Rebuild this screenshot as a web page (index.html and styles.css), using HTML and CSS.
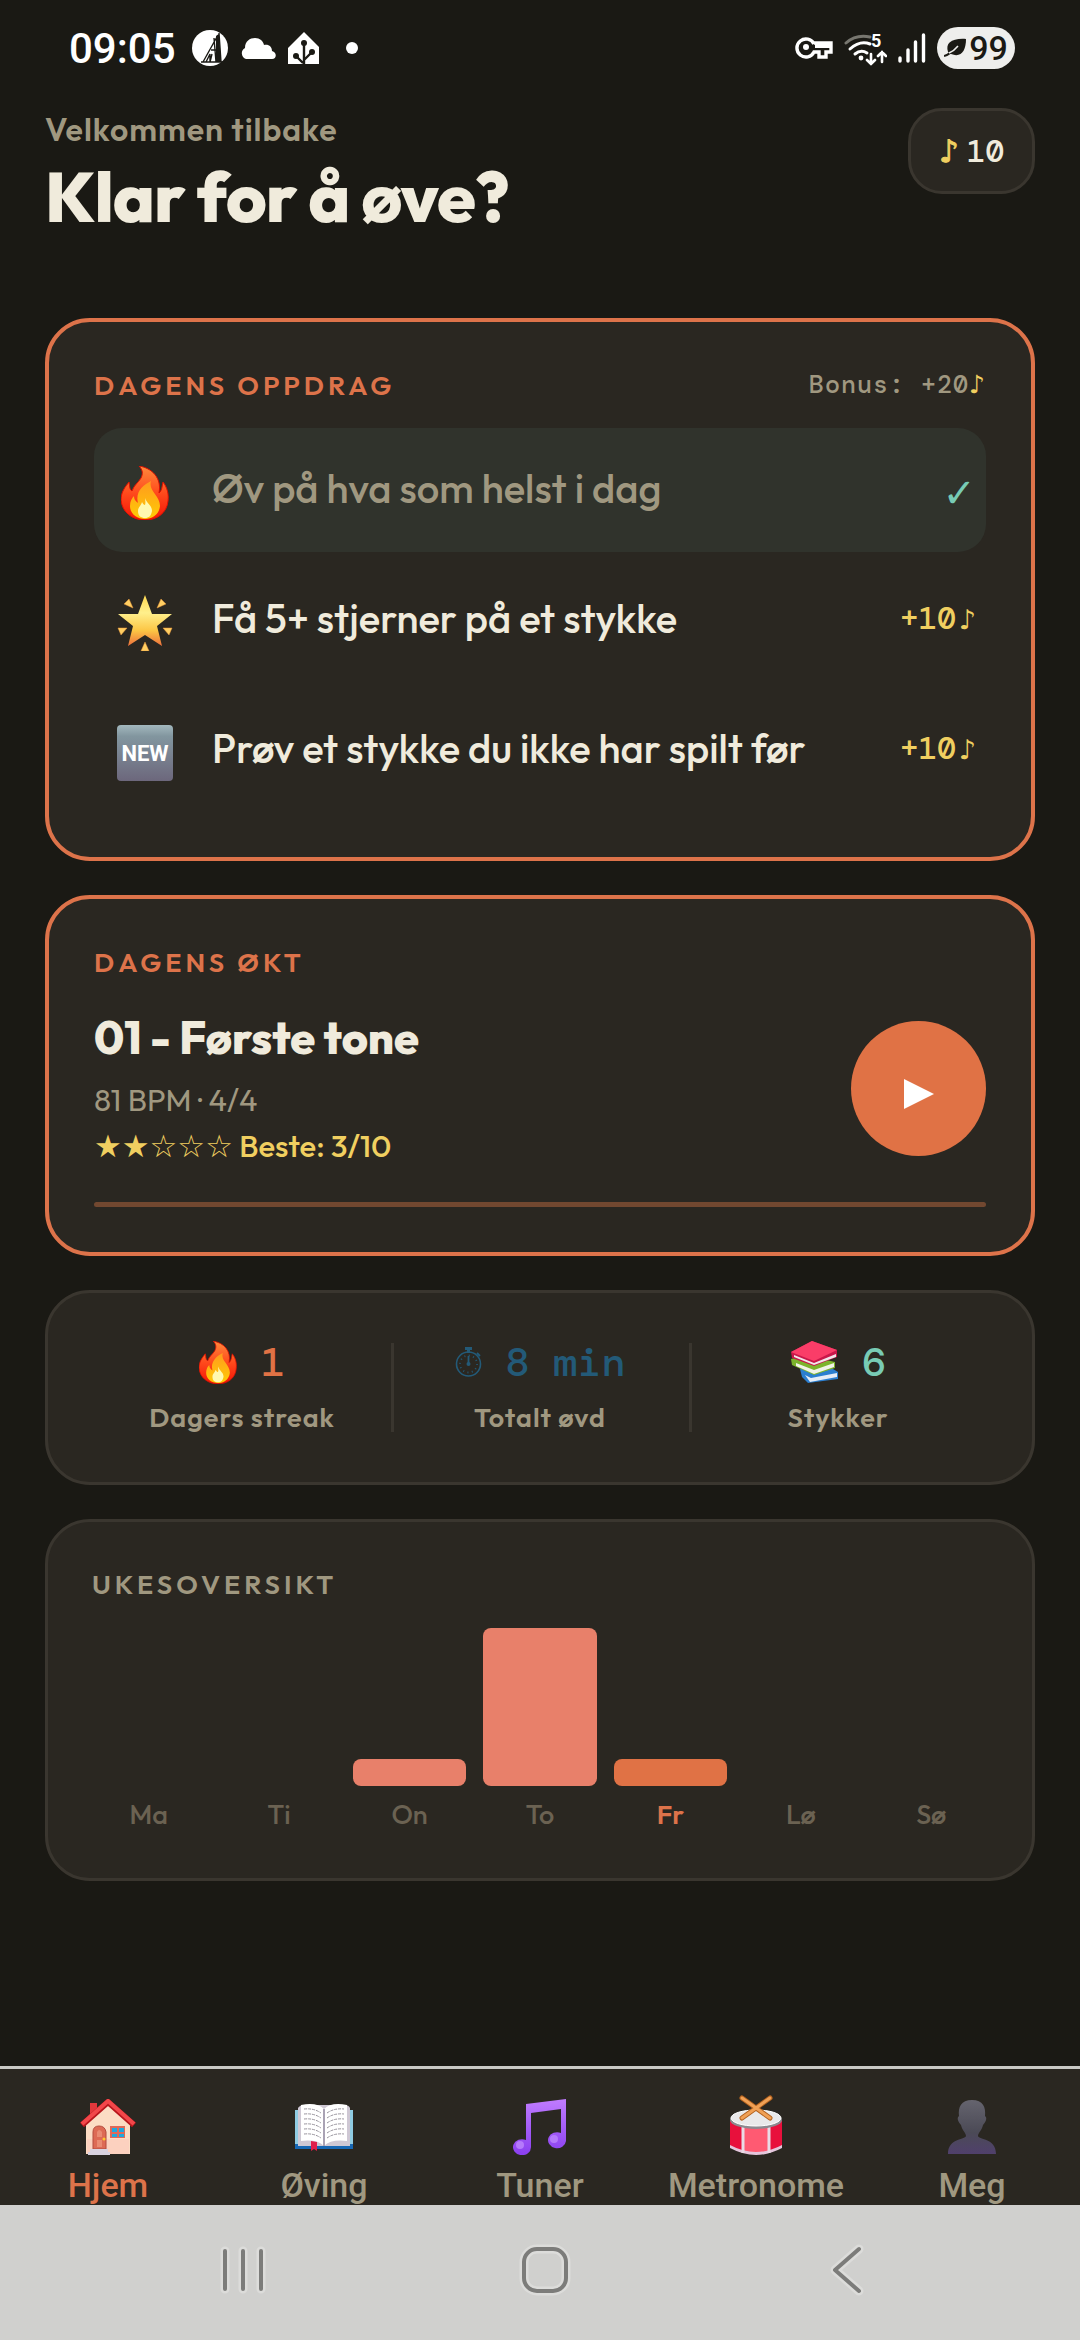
FILE: index.html
```html
<!DOCTYPE html>
<html lang="no">
  <head>
    <meta charset="UTF-8" />
    <meta name="viewport" content="width=device-width, initial-scale=1.0" />
    <link rel="stylesheet" href="styles.css" />
    <title>Klar for å øve?</title>
  </head>
  <body>
    <!-- Shared icons -->
    <svg class="sprite" aria-hidden="true">
      <defs>
        <linearGradient id="flame-outer" x1="0" y1="0" x2="0" y2="1">
          <stop offset="0" stop-color="#ff8a3c" />
          <stop offset="0.5" stop-color="#ff4a1c" />
          <stop offset="1" stop-color="#f31406" />
        </linearGradient>
        <linearGradient id="flame-mid" x1="0" y1="0" x2="0" y2="1">
          <stop offset="0" stop-color="#ff9a1e" />
          <stop offset="1" stop-color="#ffcb05" />
        </linearGradient>
      </defs>
      <symbol id="flame" viewBox="0 0 48 54">
        <path d="M18 0C31 2 41 12 38 27C41 25 41 20 42 16C46 21 48 28 47 35C46 47 36 54 24 54C11 54 1 46 0 34C0 26 4 21 8 16C9 20 8 23 11 25C13 19 17 17 20 12C22 8 22 4 18 0Z" fill="url(#flame-outer)" stroke="#e01000" stroke-width="1" />
        <path d="M30 15C27 25 39 29 39 40C38 49 31 53 24 53C16 53 9 48 9 40C9 35 11 32 13 30C13 34 15 35 17 37C14 26 22 19 30 15Z" fill="url(#flame-mid)" />
        <path d="M24 32C26 38 31 39 31 45C30 50 28 52 24 52C20 52 17 50 17 45C17 41 20 40 21 36C22 38 23 39 24 39C25 36 24 34 24 32Z" fill="#fff9b0" />
      </symbol>
    </svg>

    <div class="status-bar">
      <div class="status-left">
        <span class="time">09:05</span>
        <svg width="36" height="36" viewBox="0 0 36 36">
          <circle cx="18" cy="18" r="18" fill="#fff" />
          <path d="M27 3L29 32M26 5L11 32M22 8L24 32M19 20h6M14 32l4-8v8m2-8l-2 8M9 32h22" fill="none" stroke="#1a1914" stroke-width="1.4" />
          <path d="M24 6l3-2 2 28h-5z" fill="#1a1914" />
        </svg>
        <svg width="36" height="21" viewBox="0 0 36 21">
          <path d="M6 21a6 6 0 0 1-1-11C5 3 10 0 15 0c5 0 8 3 9 7c5-1 8 2 8 6c5 1 5 8 0 8z" fill="#fff" />
        </svg>
        <svg class="icon-home-assistant" width="32" height="32" viewBox="0 0 32 32">
          <path d="M16 0L31 15v17H0V16z" fill="#fff" />
          <path d="M16 11v21M16 28l8-8M15 31l-7-7" fill="none" stroke="#1a1914" stroke-width="2.4" />
          <circle cx="16" cy="11" r="3" fill="#1a1914" />
          <circle cx="24" cy="20" r="3" fill="#1a1914" />
          <circle cx="8" cy="24" r="3" fill="#1a1914" />
        </svg>
        <span class="dot"></span>
      </div>
      <div class="status-right">
        <svg width="38" height="22" viewBox="0 0 38 22">
          <path d="M19 7A9 9 0 1 0 19 15h5v5h7v-5h5V6H19" fill="none" stroke="#fff" stroke-width="3.4" />
          <circle cx="11" cy="10" r="3" fill="#fff" />
          <path d="M20 7h16v4H20z" fill="#fff" />
        </svg>
        <svg class="icon-wifi" width="43" height="36" viewBox="0 -4 43 36">
          <g fill="none" stroke-linecap="round" stroke-width="3">
            <path d="M2 9Q12 0 26 3" stroke="#77766f" />
            <path d="M6 15Q16 6 26 10M11 20Q17 15 23 19" stroke="#fff" />
            <path d="M27 20v10m-4-4l4 4 4-4M38 28V18m-4 4l4-4 4 4" stroke="#fff" stroke-width="2.6" />
          </g>
          <circle cx="17" cy="24" r="2.4" fill="#fff" />
          <text x="27" y="13" class="wifi-band">5</text>
        </svg>
        <svg width="28" height="30" viewBox="0 0 28 30">
          <path d="M2 25v3M10 17v11M17.500 9v19M25.500 2v26" stroke="#fff" stroke-width="3.400" stroke-linecap="round" />
        </svg>
        <span class="battery">
          <svg width="22" height="20" viewBox="0 0 22 20">
            <path d="M4 14C1 5 8 0 22 1C22 13 17 20 7 16z" fill="#1a1914" />
            <path d="M0 18Q7 16 14 8" fill="none" stroke="#1a1914" stroke-width="2" />
            <path d="M5 15Q10 13 14 8" fill="none" stroke="#eeeeec" stroke-width="1.500" />
          </svg>
          99
        </span>
      </div>
    </div>

    <main>
      <header>
        <div>
          <p class="welcome">Velkommen tilbake</p>
          <h1>Klar for å øve?</h1>
        </div>
        <div class="coins"><span class="note">♪</span>10</div>
      </header>

      <section class="card card-accent">
        <div class="card-head">
          <h2>DAGENS OPPDRAG</h2>
          <span class="bonus">Bonus: +20<span class="note">♪</span></span>
        </div>
        <ul class="quests">
          <li class="quest done">
            <span class="quest-icon">
              <svg width="48" height="54"><use href="#flame" /></svg>
            </span>
            <span class="quest-name">Øv på hva som helst i dag</span>
            <span class="check">✓</span>
          </li>
          <li class="quest">
            <span class="quest-icon">
              <svg width="56" height="56" viewBox="0 0 56 56">
                <defs>
                  <linearGradient id="star" x1="0" y1="0" x2="0" y2="1">
                    <stop offset="0" stop-color="#ffd84f" />
                    <stop offset="0.35" stop-color="#fff08c" />
                    <stop offset="0.7" stop-color="#fcc544" />
                    <stop offset="1" stop-color="#ec6f3c" />
                  </linearGradient>
                </defs>
                <path d="M28 0l7 19h20L40 31l5 20-17-11-17 11 5-20L1 19h20z" fill="url(#star)" />
                <path d="M12 4l4 9-9-4zM44 4l-4 9 9-4zM1 33h9l-6 7zM55 33h-9l6 7zM28 47l4 9h-8z" fill="#ffce62" stroke="#e9963a" stroke-width="0.500" />
              </svg>
            </span>
            <span class="quest-name">Få 5+ stjerner på et stykke</span>
            <span class="reward">+10<span class="note">♪</span></span>
          </li>
          <li class="quest">
            <span class="quest-icon">
              <svg width="56" height="56" viewBox="0 0 56 56">
                <defs>
                  <linearGradient id="new" x1="0" y1="0" x2="0" y2="1">
                    <stop offset="0" stop-color="#a3b8be" />
                    <stop offset="0.2" stop-color="#82969f" />
                    <stop offset="1" stop-color="#6c677c" />
                  </linearGradient>
                </defs>
                <rect width="56" height="56" rx="4" fill="url(#new)" />
                <text x="28" y="36" class="new-label">NEW</text>
              </svg>
            </span>
            <span class="quest-name">Prøv et stykke du ikke har spilt før</span>
            <span class="reward">+10<span class="note">♪</span></span>
          </li>
        </ul>
      </section>

      <section class="card card-accent">
        <h2>DAGENS ØKT</h2>
        <div class="session">
          <div>
            <h3>01 - Første tone</h3>
            <p class="tempo">81 BPM · 4/4</p>
            <p class="best"><span class="stars">★★☆☆☆</span> Beste: 3/10</p>
          </div>
          <button class="play" aria-label="Start økt">
            <svg width="30" height="30" viewBox="0 0 30 30"><path d="M0 0l30 15L0 30z" fill="#fff" /></svg>
          </button>
        </div>
        <div class="session-progress"></div>
      </section>

      <section class="card stats">
        <div class="stat stat-streak">
          <p class="value"><svg width="38" height="43"><use href="#flame" /></svg>1</p>
          <p class="label">Dagers streak</p>
        </div>
        <div class="stat stat-time">
          <p class="value">
            <svg width="27" height="30" viewBox="0 0 27 30">
              <g fill="none" stroke="#235a78">
                <circle cx="13.500" cy="17" r="12" stroke-width="1.600" />
                <circle cx="13.500" cy="17" r="8.500" stroke-width="1.800" stroke-dasharray="1 3.450" />
                <path d="M13.500 9v8M22 6l3 3" stroke-width="1.800" />
              </g>
              <path d="M10 0h7v3h-2v3h-3V3h-2z" fill="#235a78" />
              <circle cx="13.500" cy="17" r="2" fill="#235a78" />
            </svg>8 min
          </p>
          <p class="label">Totalt øvd</p>
        </div>
        <div class="stat stat-pieces">
          <p class="value">
            <svg width="48" height="42" viewBox="0 0 48 42">
              <path d="M10 28l28-3 10 6v7L18 42l-6-6z" fill="#2b7fd0" />
              <path d="M15 34l6 3 26-5v4l-27 5z" fill="#e6edf7" />
              <path d="M1 18l14-4 30 7v6L24 34 2 24z" fill="#7cb42c" />
              <path d="M6 22l18 7 20-7v4l-20 7-18-8z" fill="#f1f3e8" />
              <path d="M1 11L22 0l25 9v7L24 25 2 17z" fill="#c9174a" />
              <path d="M1 11L22 0l25 9-23 11z" fill="#fa3d68" />
              <path d="M4 14l20 8 22-9v3l-22 8-20-8z" fill="#f2e6ea" />
            </svg>6
          </p>
          <p class="label">Stykker</p>
        </div>
      </section>

      <section class="card week">
        <h2>UKESOVERSIKT</h2>
        <div class="chart">
          <div class="bar" style="height: 0%"></div>
          <div class="bar" style="height: 0%"></div>
          <div class="bar" style="height: 17%"></div>
          <div class="bar" style="height: 100%"></div>
          <div class="bar today" style="height: 17%"></div>
          <div class="bar" style="height: 0%"></div>
          <div class="bar" style="height: 0%"></div>
        </div>
        <div class="days">
          <span>Ma</span>
          <span>Ti</span>
          <span>On</span>
          <span>To</span>
          <span class="today">Fr</span>
          <span>Lø</span>
          <span>Sø</span>
        </div>
      </section>
    </main>

    <nav class="tabs">
      <a href="#" class="tab active">
        <svg width="56" height="56" viewBox="0 0 56 56">
          <path d="M10 4h7v14h-7z" fill="#e2383c" />
          <path d="M6 25L28 5l22 20v30H6z" fill="#fcdcc4" />
          <path d="M7 40h42v15H7z" fill="#fcc9bc" opacity="0.600" />
          <path d="M2 26L28 3l26 23" fill="none" stroke="#b8161c" stroke-width="6" />
          <path d="M2 25L28 2l26 23" fill="none" stroke="#f2474a" stroke-width="4" />
          <path d="M13 50V33q0-6 6-6t7 6v17z" fill="#dd6a55" stroke="#b44b3e" />
          <path d="M17 38v-5q2-4 5 0v5zM17 41h5v7h-5z" fill="#e98a72" />
          <circle cx="24" cy="40" r="1.500" fill="#ffc82e" />
          <path d="M30 27h15v12H30z" fill="#e06a58" />
          <path d="M32 29h5v4h-5zM39 29h5v4h-5zM32 35h5v3h-5zM39 35h5v3h-5z" fill="#1fa9e0" />
          <path d="M10 50h18v3h2v3H8v-3h2z" fill="#d9d3e0" />
        </svg>
        <span>Hjem</span>
      </a>
      <a href="#" class="tab">
        <svg width="60" height="56" viewBox="0 0 60 56">
          <path d="M1 11h58v38H1z" fill="#8fcbe2" />
          <path d="M1 45h58v5H1z" fill="#1767b4" />
          <path d="M4 9q2-3 6-3h40q5 0 6 3v38H4z" fill="#cfc8d4" />
          <path d="M7 6q16-3 23 4q7-7 23-4v36q-16-2-23 5q-7-7-23-5z" fill="#fff" />
          <path d="M30 10v37" stroke="#a9a2b4" stroke-width="2" />
          <path d="M10 10q10-1 17 4M10 15q10-1 17 4M10 20q10-1 17 4M10 25q10-1 17 4M10 30q10-1 17 4M10 35q10-1 17 4M33 14q7-5 17-4M33 19q7-5 17-4M33 24q7-5 17-4M33 29q7-5 17-4M33 34q7-5 17-4M33 39q7-5 17-4" fill="none" stroke="#97939c" stroke-dasharray="3 1" />
          <path d="M17 42l6 1v9l-3-2-3 2z" fill="#e01f4c" />
        </svg>
        <span>Øving</span>
      </a>
      <a href="#" class="tab">
        <svg width="56" height="56" viewBox="0 0 56 56">
          <defs>
            <linearGradient id="tune" x1="0" y1="0" x2="0" y2="1">
              <stop offset="0" stop-color="#c07cff" />
              <stop offset="1" stop-color="#8a3ff0" />
            </linearGradient>
          </defs>
          <path d="M14 5L54 0v42a9 8 0 1 1-5-8V10L19 14v34a9 8 0 1 1-5-7z" fill="url(#tune)" />
          <circle cx="8" cy="46" r="4" fill="#b57afb" />
          <circle cx="42" cy="40" r="4" fill="#b57afb" />
        </svg>
        <span>Tuner</span>
      </a>
      <a href="#" class="tab">
        <svg width="56" height="60" viewBox="0 0 56 60">
          <path d="M2 26v26q26 14 52 0V26z" fill="#e8103c" />
          <path d="M16 32h25v26H16z" fill="#ff5a72" />
          <path d="M2 50q26 14 52 0v3q-26 14-52 0z" fill="#e4c6dc" />
          <path d="M15 32v26M41 32v26" stroke="#eadbe6" stroke-width="3" />
          <ellipse cx="28" cy="25" rx="26" ry="9" fill="#8c8a90" />
          <ellipse cx="28" cy="23" rx="25" ry="8" fill="#e9e9ea" stroke="#fff" />
          <path d="M14 3l28 20M42 3L14 23" stroke="#b4621e" stroke-width="5" stroke-linecap="round" />
          <path d="M14 3l28 20M42 3L14 23" stroke="#f0a055" stroke-width="3" stroke-linecap="round" />
        </svg>
        <span>Metronome</span>
      </a>
      <a href="#" class="tab">
        <svg width="50" height="56" viewBox="0 0 50 56">
          <defs>
            <linearGradient id="person" x1="0" y1="0" x2="0" y2="1">
              <stop offset="0" stop-color="#65646e" />
              <stop offset="0.600" stop-color="#4b4a56" />
              <stop offset="1" stop-color="#50406c" />
            </linearGradient>
          </defs>
          <path d="M25 1C36 1 39 8 38 17C41 19 38 24 36 26C35 31 31 34 31 37C32 41 49 39 49 55H1C1 39 18 41 19 37C19 34 15 31 14 26C12 24 9 19 12 17C11 8 14 1 25 1Z" fill="url(#person)" />
        </svg>
        <span>Meg</span>
      </a>
    </nav>

    <div class="system-nav">
      <button aria-label="Nylige apper">
        <svg width="48" height="52" viewBox="0 0 48 52">
          <path class="halo" d="M6 7v38M24 7v38M42 7v38" />
          <path class="line" d="M6 7v38M24 7v38M42 7v38" />
        </svg>
      </button>
      <button aria-label="Hjem">
        <svg width="52" height="52" viewBox="0 0 52 52">
          <rect class="halo" x="5" y="5" width="42" height="42" rx="13" />
          <rect class="line" x="5" y="5" width="42" height="42" rx="13" />
        </svg>
      </button>
      <button aria-label="Tilbake">
        <svg width="36" height="52" viewBox="0 0 36 52">
          <path class="halo" d="M30 5L6 26l24 21" />
          <path class="line" d="M30 5L6 26l24 21" />
        </svg>
      </button>
    </div>
  </body>
</html>
```

FILE: styles.css
```css
*,
*::after,
*::before {
  margin: 0;
  padding: 0;
  box-sizing: border-box;
}

body {
  display: flex;
  flex-direction: column;
  min-height: 100vh;
  background-color: #1a1914;
  color: #f0ebdc;
  font-family: "Outfit", "Lato", sans-serif;
}

svg {
  display: block;
  flex-shrink: 0;
}

.sprite {
  position: absolute;
  width: 0;
  height: 0;
}

/* Status bar */
.status-bar {
  display: flex;
  justify-content: space-between;
  align-items: center;
  height: 96px;
  padding: 0 65px 0 69px;
  color: #fff;
  font-family: Roboto, sans-serif;
  font-weight: 500;
}
.status-left,
.status-right {
  display: flex;
  align-items: center;
}
.status-left {
  gap: 12px;
}
.status-right {
  gap: 11px;
}
.time {
  margin-right: 4px;
  font-size: 42px;
}
.dot {
  width: 12px;
  height: 12px;
  margin-left: 14px;
  border-radius: 50%;
  background-color: #fff;
}
.wifi-band {
  fill: #fff;
  font-size: 18px;
  font-weight: 700;
}
.battery {
  display: flex;
  align-items: center;
  justify-content: center;
  gap: 3px;
  width: 78px;
  height: 42px;
  border-radius: 21px;
  background-color: #eeeeec;
  color: #1a1914;
  font-size: 34px;
}

main {
  flex: 1;
  padding: 12px 45px;
}

header {
  display: flex;
  justify-content: space-between;
  align-items: flex-start;
  margin-bottom: 80px;
}
.welcome {
  color: #a09880;
  font-size: 32px;
  font-weight: 600;
  line-height: 42px;
  letter-spacing: 1px;
}
h1 {
  margin-top: 4px;
  font-size: 70px;
  font-weight: 800;
  line-height: 84px;
  letter-spacing: -1px;
}
.coins {
  display: flex;
  align-items: center;
  justify-content: center;
  gap: 8px;
  width: 127px;
  height: 86px;
  border: 3px solid #3a362f;
  border-radius: 34px;
  background-color: #2a2721;
  font-family: "DM Mono", "Roboto Mono", "DejaVu Sans Mono", monospace;
  font-size: 31px;
  font-weight: 500;
}
.note {
  color: #f0cf60;
  font-family: "DejaVu Sans", sans-serif;
  font-weight: 700;
}
.coins .note {
  -webkit-text-stroke: 1px #f0cf60;
}

/* Cards */
.card {
  margin-bottom: 34px;
  padding: 45px;
  border: 3px solid #3a362f;
  border-radius: 45px;
  background-color: #2a2721;
}
.card-accent {
  border: 4px solid #dd734a;
}
.card-head {
  display: flex;
  justify-content: space-between;
  align-items: center;
  margin-bottom: 25px;
}
h2 {
  color: #dd734a;
  font-size: 27px;
  font-weight: 600;
  line-height: 36px;
  letter-spacing: 4px;
}
.bonus {
  color: #a09880;
  font-family: "DM Mono", "Roboto Mono", "DejaVu Sans Mono", monospace;
  font-size: 25px;
  font-weight: 500;
  line-height: 36px;
  letter-spacing: 1px;
}

.quests {
  display: grid;
  gap: 6px;
  list-style: none;
}
.quest {
  display: flex;
  align-items: center;
  height: 124px;
  padding: 0 10px 4px 22px;
  border-radius: 28px;
}
.quest.done {
  background-color: #30332c;
}
.quest-icon {
  display: flex;
  justify-content: center;
  width: 58px;
  margin-top: 10px;
  margin-right: 38px;
}
.new-label {
  fill: #fff;
  font-family: Roboto, sans-serif;
  font-size: 22px;
  font-weight: 700;
  text-anchor: middle;
}
.quest-name {
  flex: 1;
  font-size: 40px;
  font-weight: 500;
}
.quest.done .quest-name {
  color: #a09880;
}
.check {
  margin-top: 10px;
  color: #78cbb5;
  font-family: "DejaVu Sans", sans-serif;
  font-size: 40px;
  line-height: 48px;
}
.reward {
  color: #f0cf60;
  font-family: "DM Mono", "Roboto Mono", "DejaVu Sans Mono", monospace;
  font-size: 31px;
  font-weight: 500;
}
.reward .note {
  margin-left: 3px;
  font-size: 27px;
}

/* Session */
.session {
  display: flex;
  justify-content: space-between;
  align-items: center;
  margin-top: 30px;
}
h3 {
  font-size: 45px;
  font-weight: 800;
  line-height: 56px;
}
.tempo {
  margin-top: 14px;
  color: #a09880;
  font-size: 31px;
  line-height: 40px;
}
.best {
  margin-top: 6px;
  color: #f0cf60;
  font-size: 31px;
  font-weight: 500;
  line-height: 40px;
}
.stars {
  font-family: "DejaVu Sans", sans-serif;
}
.play {
  display: flex;
  align-items: center;
  justify-content: center;
  width: 135px;
  height: 135px;
  padding-top: 12px;
  border: none;
  border-radius: 50%;
  background-color: #e07245;
}
.session-progress {
  height: 5px;
  margin-top: 36px;
  border-radius: 3px;
  background-color: #724830;
}

/* Stats */
.stats {
  display: grid;
  grid-template-columns: repeat(3, 1fr);
}
.stat {
  position: relative;
  text-align: center;
}
.stat + .stat::before {
  content: "";
  position: absolute;
  top: 5px;
  bottom: 5px;
  left: 0;
  width: 3px;
  background-color: #3a362f;
}
.value {
  display: flex;
  align-items: center;
  justify-content: center;
  gap: 24px;
  height: 48px;
  font-family: "DM Mono", "Roboto Mono", "DejaVu Sans Mono", monospace;
  font-size: 40px;
  font-weight: 500;
}
.label {
  margin: 13px 0 2px;
  color: #a09880;
  font-size: 27px;
  font-weight: 600;
  line-height: 36px;
  letter-spacing: 1px;
}
.stat-streak .value {
  color: #e07245;
}
.stat-time .value {
  color: #235a78;
}
.stat-pieces .value {
  color: #78cbb5;
}

/* Week */
.week {
  padding: 44px 44px 46px;
}
.week h2 {
  color: #a09880;
}
.chart,
.days {
  display: grid;
  grid-template-columns: repeat(7, 1fr);
  gap: 17px;
}
.chart {
  align-items: end;
  height: 158px;
  margin: 26px 0 10px;
}
.bar {
  border-radius: 8px;
  background-color: #e8806a;
}
.bar.today {
  background-color: #e07245;
}
.days {
  color: #6b6252;
  font-size: 27px;
  font-weight: 500;
  line-height: 36px;
  text-align: center;
}
.days .today {
  color: #dd734a;
  font-weight: 600;
}

/* Bottom tabs */
.tabs {
  display: grid;
  grid-template-columns: repeat(5, 1fr);
  height: 139px;
  border-top: 3px solid #c9c9c5;
  background-color: #2a2721;
  overflow: hidden;
}
.tab {
  display: flex;
  flex-direction: column;
  align-items: center;
  justify-content: flex-end;
  gap: 10px;
  color: #a09880;
  font-family: Roboto, sans-serif;
  font-size: 34px;
  font-weight: 500;
  line-height: 40px;
  text-decoration: none;
}
.tab.active {
  color: #dd734a;
}

.system-nav {
  display: grid;
  grid-template-columns: repeat(3, 1fr);
  justify-items: center;
  align-items: center;
  height: 135px;
  padding: 0 82px 6px 92px;
  background-color: #d0d0ce;
}
.system-nav button {
  display: flex;
  justify-content: center;
  width: 52px;
  border: none;
  background: none;
}
.halo,
.line {
  fill: none;
  stroke-linecap: round;
  stroke-linejoin: round;
}
.halo {
  stroke: #dcdcda;
  stroke-width: 9px;
}
.line {
  stroke: #7c7c7a;
  stroke-width: 4px;
}
```
